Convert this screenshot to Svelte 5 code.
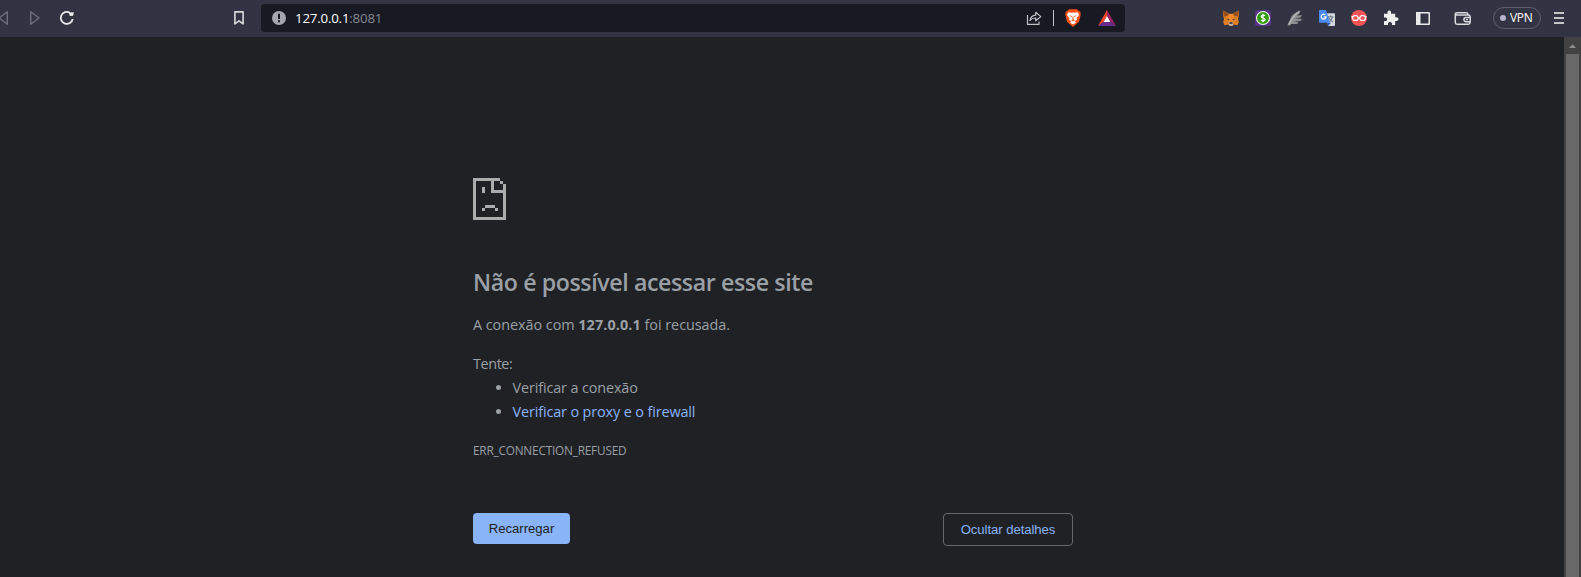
<script>
  const suggestions = [
    { text: 'Verificar a conexão', link: false },
    { text: 'Verificar o proxy e o firewall', link: true }
  ];
</script>

<div class="browser">
  <header class="toolbar">
    <svg class="back" width="9" height="16" viewBox="0 0 9 16"><path d="M-1 8 7.3 1.8v12.4z" fill="none" stroke="#6e707e" stroke-width="1.4" stroke-linejoin="round" /></svg>
    <svg class="forward" width="12" height="16" viewBox="0 0 12 16"><path d="M1.7 1.8 10 8l-8.300 6.200z" fill="none" stroke="#6e707e" stroke-width="1.4" stroke-linejoin="round" /></svg>
    <svg class="reload" width="16" height="16" viewBox="0 0 16 16"><path d="M10.800 2.700A6 6 0 1 0 13.700 9" fill="none" stroke="#ececef" stroke-width="1.800" /><path d="M9.800 2.500 14.800 2.200 14.200 5.800 10.800 6z" fill="#ececef" /></svg>
    <svg class="bookmark" width="12" height="16" viewBox="0 0 12 16"><path d="M1.900 1.900h8.200v12L6 10.800l-4.100 3.100z" fill="none" stroke="#d8d8dc" stroke-width="1.600" stroke-linejoin="round" /></svg>

    <div class="address">
      <svg class="info" width="14" height="14" viewBox="0 0 14 14"><circle cx="7" cy="7" r="7" fill="#a3a6ad" /><path d="M6 2.700h2v5.200H6zM6 9.300h2v2H6z" fill="#171a22" /></svg>
      <span class="url">127.0.0.1<span class="port">:8081</span></span>
      <svg class="share" width="16" height="16" viewBox="0 0 16 16" fill="none" stroke="#bfc1c5" stroke-width="1.200"><path d="M1.500 5v9.400h11.500v-3M9.700 5.200V2.300L14.800 6.600 9.700 10.800V8C7 7.900 5.200 8.800 4 10.500 4.400 7.300 6.400 5.500 9.700 5.200z" stroke-linejoin="round" /></svg>
      <span class="divider"></span>
      <svg class="brave" width="16" height="18" viewBox="0 0 16 18"><path d="M4 .3h8l1.700 1.800 1.500.5.5 3-1.700 7.100L8 17.900 2 12.700.3 5.600l.5-3 1.500-.5z" fill="#fb5012" /><path d="M3.400 3.200 6.500 3.700 8 3.400l1.500.3 3.100-.5 1.400 2.700-2.500 3.400.5 1.800-2.500.9L11 13.500 8 15.600 5 13.500 6.500 12 4 11.100l.5-1.800L2 5.900z" fill="#fff" /><path d="M4.200 6.200 6.800 7l-.4 1.200zM11.800 6.200 9.200 7l.4 1.200zM7.500 7.500h1v2.900l1.200.9L8 12.500l-1.700-1.200 1.200-.9z" fill="#fb5012" /></svg>
      <svg class="bat" width="18" height="16" viewBox="0 0 18 16"><path d="M9 0 0 16 6 11.500 9 6z" fill="#ff4724" /><path d="M9 0 18 16l-6-4.500L9 6z" fill="#9e1f63" /><path d="M0 16h18l-6-4.500H6z" fill="#662d91" /><path d="M9 6 5.600 12h6.800z" fill="#fff" /></svg>
    </div>

    <div class="extensions">
      <svg width="16" height="16" viewBox="0 0 16 16"><path d="M.5.600 6 3.800h4L15.500.600 16 5l-1 4 .8 3-1.300 3.200-4-.7-1 1.300h-3l-1-1.300-4 .7L.2 12 1 9 0 5z" fill="#df7f25" /><path d="M.5.600 6 3.800 4.500 6 .8 6.500zM15.500.600 10 3.800 11.500 6l3.700.5z" fill="#95501f" /><path d="M6 4h4l1.400 4.400L10 12H6L4.600 8.400z" fill="#ee8a2b" /><path d="m3.500 8.500 3 .7-.5 1.200zM12.500 8.500l-3 .7.5 1.200z" fill="#293647" /><path d="M6 12h4l.5 2-1 1.800h-3l-1-1.800z" fill="#c5b3a5" /><path d="M6.600 12.200h2.800l.3 1.500H6.300z" fill="#29262b" /></svg>
      <svg width="16" height="16" viewBox="0 0 16 16"><rect width="16" height="16" rx="2.500" fill="#573286" /><circle cx="8" cy="8" r="6.500" fill="#329d0c" stroke="#f0f5ec" stroke-width="1.100" /><path d="M10 5.700C9.400 4.900 6.300 4.700 6.300 6.500c0 1.700 3.700 1 3.700 3 0 1.900-3.300 1.700-4 .7M8 3.800v8.500" fill="none" stroke="#fff" stroke-width="1.300" /></svg>
      <svg width="16" height="16" viewBox="0 0 16 16"><path d="M.3 15.600 4.500 6.500Q6.500 3 13.500.300L12 4 9.500 5.500l5.500-.3-1.500 2.300-5.500 1 7 .5-1.500 2-6.500.5 4.500.8-1.500 1.700H4.500L2.500 15.600z" fill="#8d9091" /><path d="M2 14.500C4 9.500 7 5.500 12.500 1.500" stroke="#b8baba" stroke-width="1.300" fill="none" /></svg>
      <svg width="16" height="16" viewBox="0 0 16 16"><path d="M6.500 3.200H15a1 1 0 0 1 1 1V15a1 1 0 0 1-1 1H9.200z" fill="#d3d8dc" /><path d="M8.500 6.700h6M11.600 5.400v1.300M13.400 6.800c-.4 2.500-2 4.200-4 5.300M9.700 7.500c1.100 2.200 2.500 3.500 4.300 4.500" fill="none" stroke="#6c8190" stroke-width="1.100" /><path d="M9.200 16 8.500 12.800H12z" fill="#2856bd" /><path d="M1 0h6l4 12.800H1a1 1 0 0 1-1-1V1a1 1 0 0 1 1-1z" fill="#4b8bf3" /><path d="M6.300 4.900a2.400 2.400 0 1 0 .7 2H4.800" fill="none" stroke="#fff" stroke-width="1.200" /></svg>
      <svg width="16" height="16" viewBox="0 0 16 16"><circle cx="8" cy="8" r="8" fill="#f25354" /><g fill="#f25354" stroke="#fff" stroke-width="1.200"><rect x="1.600" y="5.700" width="5.600" height="4.700" rx="2.200" /><rect x="8.800" y="5.700" width="5.600" height="4.700" rx="2.200" /><path d="M7.200 7.700h1.600M.4 6.800h1.700M13.900 6.800h1.700" /></g></svg>
      <svg class="puzzle" width="16" height="16" viewBox="0 0 16 16"><path d="M1 3.800h3.600c-.5-1.900.3-3.200 1.700-3.200s2.200 1.300 1.700 3.200h4.200v3.600c2-.5 3.300.3 3.300 1.700s-1.300 2.300-3.300 1.800V15H8.900c.5-2-.4-3.100-1.900-3.100S4.600 13 5.100 15H1v-3.900c2 .3 3.100-.4 3.100-1.800S3 7.200 1 7.600z" fill="#efeff0" /></svg>
      <svg width="16" height="16" viewBox="0 0 16 16"><path d="M1 2h13a1 1 0 0 1 1 1v11a1 1 0 0 1-1 1H1zM5.500 3.500v10h8v-10z" fill="#e9e9eb" fill-rule="evenodd" /></svg>
    </div>
    <svg class="wallet" width="18" height="16" viewBox="0 0 18 16" fill="none" stroke="#d8dade" stroke-width="1.500"><path d="M16 7V6.500Q16 5 14.500 5H3Q1.300 5 1.300 3.800M14 4.500Q14 2.700 12.500 2.700H3Q1.300 2.700 1.300 4v8.600q0 1.700 1.700 1.700h11.300q1.700 0 1.700-1.700v-.7" /><path d="M16.200 7.600h-4.200a2.050 2.050 0 0 0 0 4.100h4.200z" /><path d="M12 9.600h2" stroke-width="1.200" /></svg>
    <button class="vpn"><span class="dot"></span>VPN</button>
    <span class="menu"><i></i><i></i><i></i></span>
  </header>

  <div class="viewport">
    <main>
      <svg class="sad" width="33" height="42" viewBox="0 0 33 42" shape-rendering="crispEdges"><path d="M0 0h27v3h3v3h3v36H0zM3 3v36h27V15H18V3zM21 3v9h9V6h-3V3zM9 9h3v6H9zM12 27h10v3H12zM9 30h3v3H9zM22 30h3v3h-3z" fill="#acacac" fill-rule="evenodd" /></svg>
      <h1>Não é possível acessar esse site</h1>
      <p class="summary">A conexão com <strong>127.0.0.1</strong> foi recusada.</p>
      <p class="try">Tente:</p>
      <ul>
        {#each suggestions as item}
          <li>{#if item.link}<span class="link">{item.text}</span>{:else}{item.text}{/if}</li>
        {/each}
      </ul>
      <p class="code">ERR_CONNECTION_REFUSED</p>
      <div class="actions">
        <button class="primary">Recarregar</button>
        <button class="secondary">Ocultar detalhes</button>
      </div>
    </main>
    <aside class="scrollbar">
      <svg width="17" height="17" viewBox="0 0 17 17"><path d="M5 11 8.500 7.300 12 11z" fill="#8d8d8d" /></svg>
      <div class="thumb"></div>
    </aside>
  </div>
</div>

<style>
  :global(body) { margin: 0; background: #202124; }
  .browser { width: 100%; height: 577px; overflow: hidden; display: flex; flex-direction: column; font-family: "Open Sans", "Noto Sans", sans-serif; }
  svg { display: block; flex: none; }
  button { font: inherit; box-sizing: border-box; margin: 0; white-space: nowrap; }
  .toolbar { height: 37px; flex: none; box-sizing: border-box; padding-bottom: 1px; background: #323443; display: flex; align-items: center; }
  .forward { margin-left: 20px; }
  .reload { margin-left: 18px; }
  .bookmark { margin-left: 158px; }
  .address { width: 864px; height: 28px; flex: none; box-sizing: border-box; margin-left: 16px; padding-left: 11px; border-radius: 4px; background: #171a22; display: flex; align-items: center; }
  .url { margin-left: 9px; flex: 1; font-size: 13.300px; line-height: 20px; letter-spacing: -.2px; color: #fff; }
  .port { color: #858890; }
  .share { margin-right: 1px; }
  .divider { width: 1px; height: 16px; margin: 0 11px 0 10px; background: #c4c5c8; }
  .bat { margin: 0 9px 0 17px; }
  .extensions { display: flex; gap: 16px; margin-left: 98px; }
  .wallet { margin-left: 23px; }
  .vpn { width: 48px; height: 22px; flex: none; margin-left: 21px; padding: 0 7px 0 6px; border: 1px solid #5c5e71; border-radius: 11px; background: transparent; color: #fff; display: flex; align-items: center; gap: 4px; font-size: 12px; line-height: 18px; letter-spacing: -.3px; }
  .dot { width: 6px; height: 6px; flex: none; border-radius: 50%; background: #b5b4ca; }
  .menu { width: 10px; margin-left: 13px; display: grid; gap: 3px; }
  .menu i { height: 2px; background: #c5c6ca; }
  .viewport { flex: 1; display: flex; justify-content: space-between; background: #202124; color: #9aa0a6; }
  main { width: 600px; margin-left: 473px; padding-top: 141px; font-size: 14.400px; line-height: 24px; }
  h1, p, ul { margin: 0; padding: 0; }
  h1 { margin-top: 46px; font-size: 23.200px; line-height: 32px; font-weight: 600; letter-spacing: -.41px; white-space: nowrap; }
  .summary { margin-top: 15px; letter-spacing: -.04px; }
  .summary strong { font-weight: 700; letter-spacing: .1px; }
  .try { margin-top: 15px; letter-spacing: -.4px; }
  ul { padding-left: 39.500px; letter-spacing: -.12px; }
  .link { color: #8ab4f8; }
  .code { margin-top: 14px; font-size: 11.800px; letter-spacing: -.2px; }
  .actions { margin-top: 51px; display: flex; justify-content: space-between; align-items: flex-start; font-family: "Liberation Sans", Arial, sans-serif; font-size: 13.125px; line-height: 15px; }
  .primary { width: 97px; height: 31px; padding: 0; border: 0; border-radius: 4px; background: #8ab4f8; color: #202124; }
  .secondary { width: 130px; height: 33px; padding: 0; border: 1px solid #65686c; border-radius: 4px; background: transparent; color: #8ab4f8; letter-spacing: -.05px; }
  .scrollbar { width: 17px; display: flex; flex-direction: column; background: #424242; }
  .thumb { flex: 1; margin: 0 2px; background: #686868; }
</style>
